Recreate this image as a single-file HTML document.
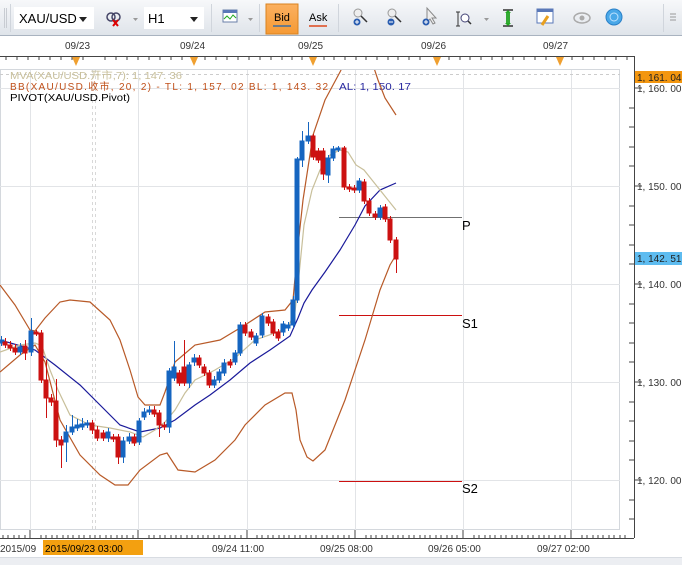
<!DOCTYPE html>
<html><head><meta charset="utf-8"><style>
html,body{margin:0;padding:0;width:682px;height:565px;overflow:hidden;background:#fff;font-family:"Liberation Sans","Noto Sans CJK SC",sans-serif}
</style></head><body>
<svg width="682" height="565" viewBox="0 0 682 565" xmlns="http://www.w3.org/2000/svg" font-family="Liberation Sans, Noto Sans CJK SC, sans-serif">
<defs>
<linearGradient id="tb" x1="0" y1="0" x2="0" y2="1"><stop offset="0" stop-color="#f7f8fa"/><stop offset="1" stop-color="#dfe4ea"/></linearGradient>
<linearGradient id="bid" x1="0" y1="0" x2="0" y2="1"><stop offset="0" stop-color="#fbb060"/><stop offset="1" stop-color="#f59a35"/></linearGradient>
</defs>
<rect x="0" y="0" width="682" height="35" fill="url(#tb)"/>
<line x1="0" y1="35.5" x2="682" y2="35.5" stroke="#a9b3c0"/>
<line x1="4.5" y1="8" x2="4.5" y2="28" stroke="#c8ccd2"/><line x1="6.5" y1="8" x2="6.5" y2="28" stroke="#c8ccd2"/>
<line x1="10.5" y1="4" x2="10.5" y2="32" stroke="#d0d5dc"/>
<rect x="14" y="7" width="80" height="22" fill="#fff"/>
<text x="19" y="23" font-size="13" fill="#000">XAU/USD</text>
<path d="M79 17h8l-4 5z" fill="#222"/>
<circle cx="111" cy="17" r="4" fill="none" stroke="#446" stroke-width="1.5"/><circle cx="116" cy="17" r="4" fill="none" stroke="#446" stroke-width="1.5"/>
<path d="M113 20l5 6M118 20l-5 6" stroke="#d00" stroke-width="2"/>
<path d="M133 18h5l-2.5 3z" fill="#999"/>
<rect x="144" y="7" width="60" height="22" fill="#fff"/>
<text x="148" y="23" font-size="13" fill="#000">H1</text>
<path d="M190 17h8l-4 5z" fill="#222"/>
<line x1="211.5" y1="4" x2="211.5" y2="32" stroke="#d0d5dc"/>
<rect x="223" y="10" width="14" height="12" fill="#fff" stroke="#6a7fa8"/><rect x="223" y="10" width="14" height="3" fill="#5a78b8"/>
<path d="M224 19l3-3 3 3 3-4 3 3" stroke="#2a2" fill="none"/>
<path d="M248 18h5l-2.5 3z" fill="#999"/>
<line x1="259.5" y1="4" x2="259.5" y2="32" stroke="#d0d5dc"/>
<rect x="266" y="4" width="32" height="30" fill="url(#bid)" stroke="#d9821f"/>
<text x="274" y="21" font-size="11" fill="#000">Bid</text>
<rect x="273" y="25" width="18" height="2" fill="#6a7a8a"/>
<text x="309" y="21" font-size="11" fill="#000">Ask</text>
<rect x="309" y="25" width="18" height="2" fill="#e07050"/>
<line x1="338.5" y1="4" x2="338.5" y2="32" stroke="#d0d5dc"/>
<g>
<circle cx="358" cy="13" r="4" fill="#eee" stroke="#999"/><path d="M361 16l6 6" stroke="#333" stroke-width="1.5"/><circle cx="357" cy="22" r="3.5" fill="#2a5db0"/><path d="M355 22h4M357 20v4" stroke="#fff"/>
<circle cx="392" cy="13" r="4" fill="#eee" stroke="#999"/><path d="M395 16l6 6" stroke="#333" stroke-width="1.5"/><circle cx="391" cy="22" r="3.5" fill="#2a5db0"/><path d="M389 22h4" stroke="#fff"/>
<path d="M427 8v14l3-3 3 5 2-1-3-5h4z" fill="#eee" stroke="#888"/><circle cx="426" cy="22" r="3.5" fill="#2a5db0"/><path d="M424 22h4M426 20v4" stroke="#fff"/>
<path d="M458 12v14M456 12h4M456 26h4" stroke="#333"/><circle cx="465" cy="18" r="4" fill="#fff" stroke="#447"/><path d="M468 21l3 3" stroke="#333" stroke-width="1.5"/>
<path d="M484 18h5l-2.5 3z" fill="#999"/>
<path d="M503 10h10M503 26h10M508 11v14" stroke="#333" stroke-width="1.5"/><path d="M505 13h6l-3 -3zM505 23h6l-3 3z" fill="#2a2"/><rect x="506" y="13" width="4" height="10" fill="#3a3"/>
<rect x="537" y="9" width="16" height="14" fill="#fff" stroke="#5a78b8"/><rect x="537" y="9" width="16" height="3" fill="#5a78b8"/><path d="M548 16l-6 9" stroke="#e8a020" stroke-width="3"/>
<ellipse cx="582" cy="18" rx="8" ry="5" fill="none" stroke="#aaa" stroke-width="1.5"/><circle cx="582" cy="18" r="2.5" fill="#aaa"/>
<circle cx="614" cy="17" r="8" fill="#4aa8e8" stroke="#2a80c8"/><circle cx="614" cy="17" r="4" fill="none" stroke="#bfe3ff"/>
<line x1="663.5" y1="4" x2="663.5" y2="32" stroke="#d0d5dc"/>
<path d="M670 14h6M670 17h6M670 20h6" stroke="#999"/>
</g>
<g font-size="10" fill="#333">
<text x="65" y="49">09/23</text><text x="180" y="49">09/24</text><text x="298" y="49">09/25</text><text x="421" y="49">09/26</text><text x="543" y="49">09/27</text>
</g>
<line x1="0" y1="56.5" x2="634" y2="56.5" stroke="#444"/>
<g stroke="#444">
<path d="M6 56v4M17 56v4M28 56v4M39 56v4M50 56v4M61 56v4M72 56v4M83 56v4M105 56v4M116 56v4M127 56v4M138 56v4M149 56v4M160 56v4M171 56v4M182 56v4M205 56v4M216 56v4M227 56v4M238 56v4M249 56v4M260 56v4M271 56v4M282 56v4M292 56v4M302 56v4M324 56v4M334 56v4M345 56v4M356 56v4M366 56v4M377 56v4M388 56v4M398 56v4M409 56v4M420 56v4M449 56v4M460 56v4M470 56v4M481 56v4M492 56v4M502 56v4M513 56v4M524 56v4M535 56v4M546 56v4M572 56v4M583 56v4M594 56v4M605 56v4M616 56v4M627 56v4"/>
</g>
<g fill="#f0a030">
<path d="M72 57h8l-4 9z"/><path d="M190 57h8l-4 9z"/><path d="M309 57h8l-4 9z"/><path d="M433 57h8l-4 9z"/><path d="M556 57h8l-4 9z"/>
</g>
<rect x="0.5" y="69.5" width="619" height="460" fill="#fff" stroke="#d4d8dd"/>
<g stroke="#e2e4e7">
<path d="M30.5 70v460M138.5 70v460M247.5 70v460M355.5 70v460M463.5 70v460M571.5 70v460"/>
<path d="M0 88.5h620M0 186.5h620M0 284.5h620M0 382.5h620M0 480.5h620"/>
</g>
<path d="M92.5 70v460M95.5 70v460" stroke="#d8d8d8" stroke-dasharray="3,3"/>
<path d="M0 74.5h620" stroke="#ccc" stroke-dasharray="3,3"/>
<line x1="634.5" y1="56" x2="634.5" y2="538" stroke="#444"/>
<g stroke="#444">
<path d="M634 88h8M634 186h8M634 284h8M634 382h8M634 480h8"/>
<path d="M629 108h5M629 127h5M629 147h5M629 166h5M629 206h5M629 225h5M629 245h5M629 264h5M629 304h5M629 323h5M629 343h5M629 362h5M629 402h5M629 421h5M629 441h5M629 460h5M629 500h5M629 519h5"/>
</g>
<g font-size="10" fill="#333">
<text x="637" y="92">1, 160. 00</text><text x="637" y="190">1, 150. 00</text><text x="637" y="288">1, 140. 00</text><text x="637" y="386">1, 130. 00</text><text x="637" y="484">1, 120. 00</text>
</g>
<rect x="635" y="71" width="47" height="12" fill="#f3960f"/><text x="637" y="81" font-size="10" fill="#222">1, 161. 04</text>
<rect x="635" y="252" width="47" height="13" fill="#5ebcf0"/><text x="637" y="262" font-size="10" fill="#222">1, 142. 51</text>
<line x1="0" y1="538.5" x2="634" y2="538.5" stroke="#444"/>
<g stroke="#444">
<path d="M30 530v8M138 530v8M247 530v8M355 530v8M463 530v8M571 530v8"/>
<path d="M3 535v3M8 535v3M14 535v3M19 535v3M25 535v3M41 535v3M46 535v3M52 535v3M57 535v3M63 535v3M68 535v3M73 535v3M79 535v3M84 535v3M90 535v3M95 535v3M100 535v3M106 535v3M111 535v3M117 535v3M122 535v3M127 535v3M133 535v3M149 535v3M154 535v3M160 535v3M165 535v3M171 535v3M176 535v3M181 535v3M187 535v3M192 535v3M198 535v3M203 535v3M208 535v3M214 535v3M219 535v3M225 535v3M230 535v3M235 535v3M241 535v3M257 535v3M262 535v3M268 535v3M273 535v3M279 535v3M284 535v3M289 535v3M295 535v3M300 535v3M306 535v3M311 535v3M316 535v3M322 535v3M327 535v3M333 535v3M338 535v3M344 535v3M349 535v3M366 535v3M371 535v3M376 535v3M382 535v3M387 535v3M393 535v3M398 535v3M403 535v3M409 535v3M414 535v3M420 535v3M425 535v3M430 535v3M436 535v3M441 535v3M447 535v3M452 535v3M457 535v3M474 535v3M479 535v3M485 535v3M490 535v3M495 535v3M501 535v3M506 535v3M512 535v3M517 535v3M522 535v3M528 535v3M533 535v3M539 535v3M544 535v3M549 535v3M555 535v3M560 535v3M565 535v3M582 535v3M587 535v3M593 535v3M598 535v3M603 535v3M609 535v3M614 535v3M620 535v3M625 535v3"/>
</g>
<g font-size="10" fill="#333">
<text x="0" y="552">2015/09</text>
<rect x="43" y="540" width="100" height="15" fill="#f3a010"/>
<text x="45" y="552" fill="#000">2015/09/23 03:00</text>
<text x="212" y="552">09/24 11:00</text><text x="320" y="552">09/25 08:00</text><text x="428" y="552">09/26 05:00</text><text x="537" y="552">09/27 02:00</text>
</g>
<rect x="0" y="557" width="682" height="8" fill="#eceef2"/>
<line x1="0" y1="557.5" x2="682" y2="557.5" stroke="#d8dce2"/>
<g font-size="10">
<text x="10" y="79" fill="#c8bf9a" textLength="172" lengthAdjust="spacingAndGlyphs">MVA(XAU/USD.开市,7): 1, 147. 36</text>
<text x="10" y="90" fill="#c0501a" textLength="318" lengthAdjust="spacing">BB(XAU/USD.收市, 20, 2) -  TL: 1, 157. 02  BL: 1, 143. 32</text>
<text x="339" y="90" fill="#2a2aa0" textLength="72" lengthAdjust="spacingAndGlyphs">AL: 1, 150. 17</text>
<text x="10" y="101" fill="#000" textLength="120" lengthAdjust="spacingAndGlyphs">PIVOT(XAU/USD.Pivot)</text>
</g>
<line x1="339" y1="217.5" x2="462" y2="217.5" stroke="#707070"/>
<line x1="339" y1="315.5" x2="462" y2="315.5" stroke="#cc1010"/>
<line x1="339" y1="481.5" x2="462" y2="481.5" stroke="#cc1010"/>
<g font-size="13" fill="#000"><text x="462" y="230">P</text><text x="462" y="328">S1</text><text x="462" y="493">S2</text></g>
<clipPath id="cb"><rect x="0" y="70" width="620" height="460"/></clipPath>
<g clip-path="url(#cb)" fill="none" stroke-width="1.2">
<polyline stroke="#b85a28" points="0,285 15,305 30,330 35,331 45,318 60,302 70,300 90,302 110,320 120,340 130,370 138,397 145,405 160,405 165,392 175,362 195,345 220,340 245,325 265,312 285,310 293,300 297,255 303,200 313,135 325,100 340,72 345,62 372,62 378,80 385,98 396,115"/>
<polyline stroke="#b85a28" points="0,372 20,355 35,345 45,362 60,420 80,455 100,475 115,485 128,485 140,470 160,455 167,453 178,470 195,472 215,460 235,440 245,425 265,405 285,393 292,393 296,410 300,440 307,457 313,461 325,450 345,400 365,340 380,290 390,265 396,255"/>
<polyline stroke="#1a1a9a" points="0,340 35,350 55,365 80,385 100,405 120,425 140,432 160,428 175,420 195,405 210,395 230,380 250,363 270,350 290,336 298,318 304,303 312,290 325,272 340,250 355,225 365,206 380,190 396,183"/>
<polyline stroke="#c8bf9a" points="0,352 20,345 35,343 42,346 50,370 58,390 70,415 90,425 110,428 130,432 143,437 155,430 165,422 175,410 185,393 195,380 215,370 235,358 255,340 275,333 288,327 295,312 299,275 304,225 312,190 320,170 330,155 340,150 348,152 356,165 364,170 372,180 380,190 388,200 396,210"/>
</g>
<g stroke-width="1">
<g stroke="#1565c0" fill="#1565c0">
<path d="M1.5 336v10M20.5 343v12M31.5 318v38M66.5 425v37M72.5 415v20M77.5 419v12M82.5 418v12M87.5 420v8M108.5 428v14M123.5 437v26M129.5 433v11M139.5 418v27M144.5 408v12M149.5 406v9M169.5 368v65M174.5 341v40M189.5 362v26M194.5 354v12M214.5 376v12M219.5 369v14M224.5 359v17M235.5 350v15M240.5 322v34M256.5 333v13M262.5 313v25M283.5 321v15M288.5 322v9M293.5 296v32M297.5 157v146M302.5 131v36M308.5 122v22M328.5 155v28M333.5 146v15M338.5 146v6M359.5 178v15M380.5 205v15"/>
<rect x="0" y="340" width="4" height="3"/><rect x="18" y="347" width="4" height="5"/><rect x="29" y="331" width="4" height="21"/><rect x="64" y="432" width="4" height="10"/><rect x="70" y="427" width="4" height="5"/><rect x="75" y="425" width="4" height="3"/><rect x="80" y="424" width="4" height="3"/><rect x="85" y="423" width="4" height="2"/><rect x="106" y="432" width="4" height="6"/><rect x="121" y="441" width="4" height="16"/><rect x="127" y="437" width="4" height="4"/><rect x="137" y="421" width="4" height="21"/><rect x="142" y="412" width="4" height="5"/><rect x="147" y="410" width="4" height="2"/><rect x="167" y="371" width="4" height="56"/><rect x="172" y="367" width="4" height="11"/><rect x="187" y="365" width="4" height="18"/><rect x="192" y="358" width="4" height="4"/><rect x="212" y="380" width="4" height="5"/><rect x="217" y="372" width="4" height="8"/><rect x="222" y="363" width="4" height="10"/><rect x="233" y="353" width="4" height="9"/><rect x="238" y="325" width="4" height="28"/><rect x="254" y="336" width="4" height="7"/><rect x="260" y="316" width="4" height="19"/><rect x="281" y="324" width="4" height="8"/><rect x="286" y="325" width="4" height="3"/><rect x="291" y="300" width="4" height="25"/><rect x="295" y="159" width="4" height="141"/><rect x="300" y="141" width="4" height="19"/><rect x="306" y="136" width="4" height="5"/><rect x="326" y="158" width="4" height="17"/><rect x="331" y="149" width="4" height="9"/><rect x="336" y="148" width="4" height="2"/><rect x="357" y="181" width="4" height="9"/><rect x="378" y="208" width="4" height="9"/>
</g>
<g stroke="#cc1111" fill="#cc1111">
<path d="M5.5 338v10M10.5 341v10M15.5 344v11M25.5 340v20M36.5 330v6M41.5 330v53M46.5 360v58M51.5 394v12M56.5 379v68M61.5 436v32M92.5 420v14M97.5 426v15M103.5 430v11M113.5 434v8M118.5 434v30M134.5 434v12M154.5 406v11M159.5 410v27M164.5 422v8M179.5 370v16M184.5 340v46M199.5 355v13M204.5 364v12M209.5 370v18M230.5 359v9M245.5 322v14M251.5 329v11M268.5 314v12M273.5 319v17M278.5 329v12M313.5 134v26M318.5 148v15M323.5 148v32M344.5 146v44M349.5 184v8M354.5 185v8M364.5 179v25M369.5 198v18M375.5 211v9M385.5 204v18M390.5 216v27M396.5 237v36"/>
<rect x="3" y="342" width="4" height="3"/><rect x="8" y="345" width="4" height="3"/><rect x="13" y="348" width="4" height="4"/><rect x="23" y="346" width="4" height="7"/><rect x="34" y="332" width="4" height="2"/><rect x="39" y="333" width="4" height="47"/><rect x="44" y="380" width="4" height="18"/><rect x="49" y="398" width="4" height="4"/><rect x="54" y="401" width="4" height="39"/><rect x="59" y="440" width="4" height="5"/><rect x="90" y="423" width="4" height="7"/><rect x="95" y="430" width="4" height="8"/><rect x="101" y="433" width="4" height="5"/><rect x="111" y="437" width="4" height="2"/><rect x="116" y="437" width="4" height="20"/><rect x="132" y="437" width="4" height="6"/><rect x="152" y="410" width="4" height="4"/><rect x="157" y="413" width="4" height="12"/><rect x="162" y="425" width="4" height="2"/><rect x="177" y="373" width="4" height="10"/><rect x="182" y="367" width="4" height="16"/><rect x="197" y="358" width="4" height="7"/><rect x="202" y="367" width="4" height="6"/><rect x="207" y="373" width="4" height="12"/><rect x="228" y="362" width="4" height="3"/><rect x="243" y="325" width="4" height="8"/><rect x="249" y="332" width="4" height="5"/><rect x="266" y="317" width="4" height="6"/><rect x="271" y="322" width="4" height="11"/><rect x="276" y="332" width="4" height="6"/><rect x="311" y="136" width="4" height="21"/><rect x="316" y="151" width="4" height="9"/><rect x="321" y="151" width="4" height="23"/><rect x="342" y="148" width="4" height="39"/><rect x="347" y="187" width="4" height="2"/><rect x="352" y="188" width="4" height="2"/><rect x="362" y="182" width="4" height="19"/><rect x="367" y="201" width="4" height="12"/><rect x="373" y="214" width="4" height="3"/><rect x="383" y="207" width="4" height="12"/><rect x="388" y="219" width="4" height="21"/><rect x="394" y="240" width="4" height="19"/>
</g>
</g>
</svg>
</body></html>
